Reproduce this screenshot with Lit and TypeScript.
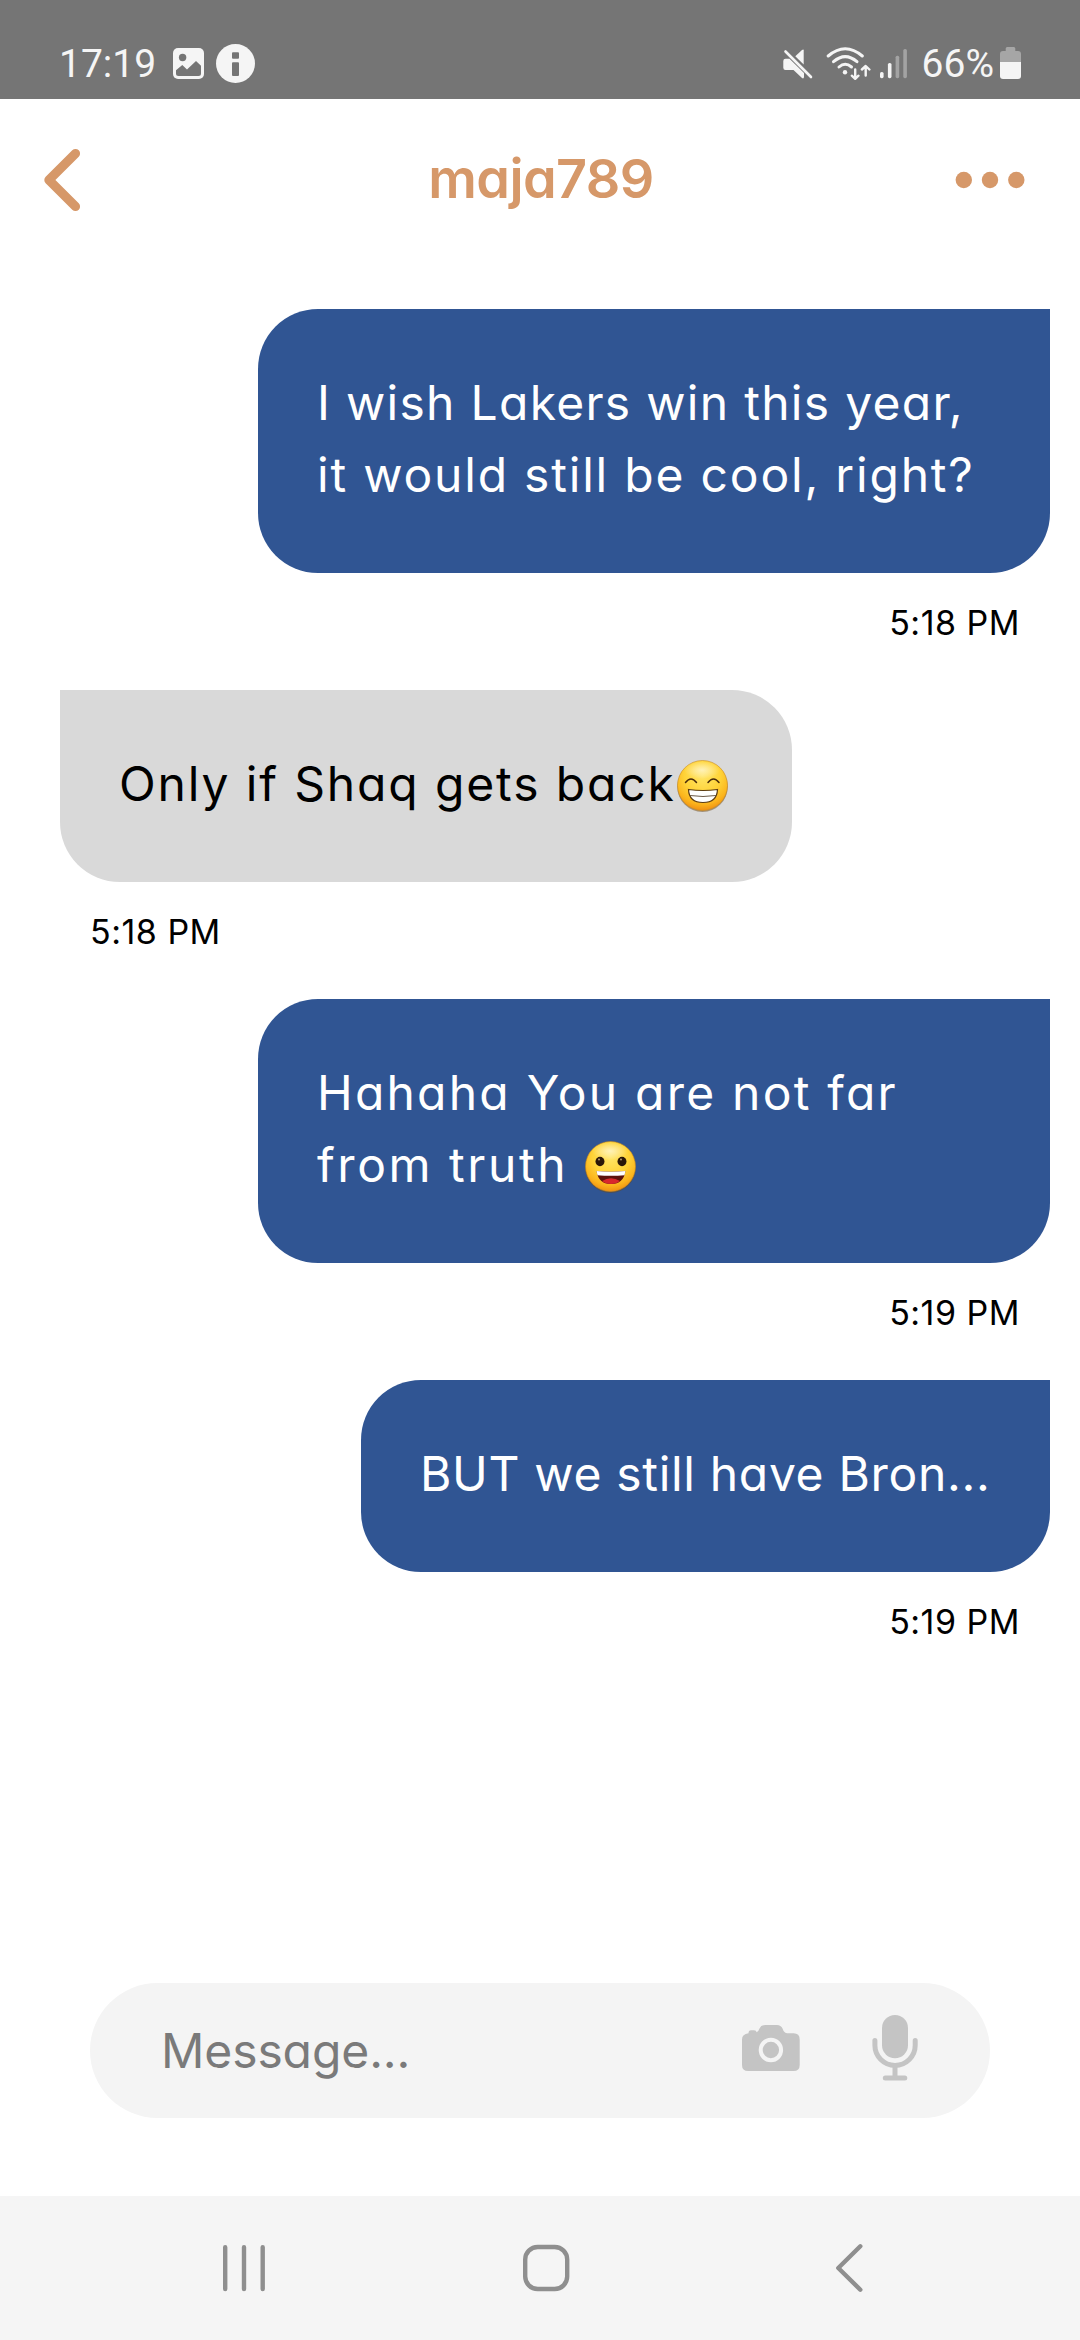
import { LitElement, html, css, svg, nothing } from "lit";
import { customElement, property } from "lit/decorators.js";
import { classMap } from "lit/directives/class-map.js";
import { styleMap } from "lit/directives/style-map.js";

type Emoji = "beaming" | "grinning";

interface Line {
  text: string;
  tracking: number;
  emoji?: Emoji;
}

interface Message {
  mine: boolean;
  width: number;
  lines: Line[];
  time: string;
}

const MESSAGES: Message[] = [
  {
    mine: true,
    width: 792,
    lines: [
      { text: "I wish Lakers win this year,", tracking: 1.29 },
      { text: "it would still be cool, right?", tracking: 1.8 },
    ],
    time: "5:18 PM",
  },
  {
    mine: false,
    width: 732,
    lines: [{ text: "Only if Shaq gets back", tracking: 1.86, emoji: "beaming" }],
    time: "5:18 PM",
  },
  {
    mine: true,
    width: 792,
    lines: [
      { text: "Hahaha You are not far", tracking: 2.22 },
      { text: "from truth ", tracking: 2.55, emoji: "grinning" },
    ],
    time: "5:19 PM",
  },
  {
    mine: true,
    width: 689,
    lines: [{ text: "BUT we still have Bron...", tracking: 0.68 }],
    time: "5:19 PM",
  },
];

/** Glossy round smiley, drawn in two expressions. */
@customElement("chat-emoji")
export class ChatEmoji extends LitElement {
  @property() kind: Emoji = "grinning";

  static styles = css`
    :host {
      display: block;
      flex: none;
      width: 51px;
      height: 53px;
    }
    svg {
      display: block;
    }
  `;

  private beaming() {
    return svg`
      <path d="M8.500 22.500Q14 15.500 19.500 22.500M31 22.500Q36.500 15.500 42 22.500" fill="none" stroke="#4a2c0a" stroke-width="1.500" stroke-linecap="round"/>
      <path d="M11.500 29.500Q26 31.500 40.500 29.500Q40 42.500 26 42.500Q12 42.500 11.500 29.500Z" fill="#fff" stroke="#5a3a10" stroke-width="1.200"/>
      <path d="M13 35.500Q26 37.500 39 35.500" fill="none" stroke="#6b5a48" stroke-width="1"/>`;
  }

  private grinning() {
    return svg`
      <ellipse cx="15" cy="20.500" rx="4.500" ry="4.700" fill="#2a1608"/>
      <ellipse cx="37" cy="20.500" rx="4.500" ry="4.700" fill="#2a1608"/>
      <circle cx="14" cy="18.600" r="1" fill="#b59a72"/>
      <circle cx="36" cy="18.600" r="1" fill="#b59a72"/>
      <path d="M11.500 30Q26 31.500 40.500 30Q38.500 43 26 43Q13.500 43 11.500 30Z" fill="#5c120c"/>
      <path d="M17 40Q26 34.500 35 40Q31.500 43 26 43Q20.500 43 17 40Z" fill="#d9282c"/>
      <path d="M11.500 30Q26 31.500 40.500 30L39.500 34.200Q26 35.500 12.500 34.200Z" fill="#fff"/>`;
  }

  render() {
    return html`
      <svg width="51" height="53" viewBox="0 0 51 53" role="img" aria-label=${this.kind}>
        <defs>
          <radialGradient id="skin" cx=".5" cy=".3" r=".72">
            <stop offset="0" stop-color="#ffe568" />
            <stop offset=".5" stop-color="#ffd338" />
            <stop offset=".8" stop-color="#fbb41c" />
            <stop offset="1" stop-color="#ee8a10" />
          </radialGradient>
          <radialGradient id="shine">
            <stop offset="0" stop-color="#fff6cf" stop-opacity=".8" />
            <stop offset="1" stop-color="#fff6cf" stop-opacity="0" />
          </radialGradient>
        </defs>
        <circle cx="25.500" cy="26.800" r="25.200" fill="#6b4a1a" opacity=".5" />
        <circle cx="25.500" cy="25.500" r="25" fill="url(#skin)" stroke="#c98a1c" stroke-width=".6" />
        <ellipse cx="25" cy="10" rx="18" ry="9" fill="url(#shine)" />
        ${this.kind === "beaming" ? this.beaming() : this.grinning()}
      </svg>
    `;
  }
}

/** System bar with clock, notifications and connectivity. */
@customElement("status-bar")
export class StatusBar extends LitElement {
  static styles = css`
    :host {
      display: flex;
      justify-content: space-between;
      height: 99px;
      box-sizing: border-box;
      padding: 28px 59px 0;
      background: #757575;
      color: #f5f5f5;
      font: 400 39px/46px Roboto, sans-serif;
    }
    .group {
      display: flex;
      align-items: center;
    }
    svg {
      display: block;
      flex: none;
    }
    .picture {
      margin-left: 17px;
    }
    .info {
      margin-left: 12px;
    }
    .wifi {
      margin-left: 13px;
    }
    .signal {
      margin-left: 8px;
    }
    .level {
      margin-left: 14px;
    }
    .battery {
      margin-left: 6px;
    }
  `;

  render() {
    return html`
      <div class="group">
        <span>17:19</span>
        <svg class="picture" width="31" height="39" viewBox="173 44 31 39">
          <rect x="173" y="48" width="31" height="31" rx="5" fill="#f5f5f5" />
          <circle cx="182.600" cy="57.500" r="3.700" fill="#757575" />
          <path d="M176 70.300L182.300 64.900L187 69.400L196 60.900L201 65.800V73.500Q201 76 198.500 76H178.500Q176 76 176 73.500Z" fill="#757575" />
        </svg>
        <svg class="info" width="39" height="39" viewBox="216 44 39 39">
          <circle cx="235.500" cy="63.500" r="19.500" fill="#f5f5f5" />
          <rect x="232" y="52.300" width="7" height="6.400" rx="1" fill="#757575" />
          <rect x="232" y="62.300" width="7" height="13.700" rx="1" fill="#757575" />
        </svg>
      </div>
      <div class="group">
        <svg width="31" height="39" viewBox="782 44 31 39">
          <path d="M803.700 50.500V64.500L795.300 56.200L802 50Q803.700 48.800 803.700 50.500Z" fill="#f5f5f5" />
          <path d="M785.500 58.800H789.500L804 73V77Q803.700 79.300 802 78L793.500 70H785.500Q783.300 70 783.300 67.800V61Q783.300 58.800 785.500 58.800Z" fill="#f5f5f5" />
          <path d="M785.500 51.500L811 77" stroke="#f5f5f5" stroke-width="2.600" stroke-linecap="round" />
        </svg>
        <svg class="wifi" width="45" height="39" viewBox="826 44 45 39" fill="none" stroke="#f5f5f5" stroke-width="3" stroke-linecap="round">
          <path d="M828.200 56Q845.200 41.500 862.300 56" />
          <path d="M833.500 61.700Q845.200 51.500 857 61.700" />
          <path d="M839 67Q845.200 61.500 851.500 67" />
          <circle cx="845" cy="72.300" r="2.200" fill="#f5f5f5" stroke="none" />
          <g stroke-width="2.400" stroke-linejoin="round">
            <path d="M855.200 69.500V78.500M851.800 75.700L855.200 78.800L858.500 75.700" />
            <path d="M865.700 75.500V66.500M861.900 69.500L865.700 66L869.400 69.500" />
          </g>
        </svg>
        <svg class="signal" width="29" height="39" viewBox="879 44 29 39">
          <rect x="880" y="72" width="3.600" height="6.200" rx="1.600" fill="#f5f5f5" />
          <rect x="887.900" y="63" width="3.600" height="15.200" rx="1.600" fill="#f5f5f5" />
          <rect x="895.600" y="55.700" width="3.600" height="22.500" rx="1.600" fill="#a3a3a3" />
          <rect x="903.300" y="49" width="3.600" height="29.200" rx="1.600" fill="#a3a3a3" />
        </svg>
        <span class="level">66%</span>
        <svg class="battery" width="21" height="39" viewBox="1000 44 21 39">
          <path d="M1000 62V54Q1000 51 1003 51H1005.700V48.500Q1005.700 47 1007.200 47H1013.800Q1015.300 47 1015.300 48.500V51H1018Q1021 51 1021 54V62Z" fill="#a6a6a6" />
          <path d="M1000 62H1021V76Q1021 79 1018 79H1003Q1000 79 1000 76Z" fill="#f5f5f5" />
        </svg>
      </div>
    `;
  }
}

@customElement("chat-header")
export class ChatHeader extends LitElement {
  @property() heading = "";

  static styles = css`
    :host {
      display: grid;
      grid-template-columns: 1fr auto 1fr;
      align-items: center;
      height: 162px;
      box-sizing: border-box;
      padding: 0 53px 0 42px;
    }
    svg {
      display: block;
    }
    .more {
      justify-self: end;
    }
    h1 {
      margin: 0 0 3px 13px;
      color: #d69869;
      font: 600 54px/65px Inter, sans-serif;
      font-feature-settings: "cv11" 1;
      letter-spacing: -0.6px;
    }
  `;

  render() {
    return html`
      <svg width="40" height="66" viewBox="42 147 40 66">
        <path d="M75.500 153.500L48.900 180L75.500 206.500" fill="none" stroke="#d69869" stroke-width="9.200" stroke-linecap="round" stroke-linejoin="round" />
      </svg>
      <h1>${this.heading}</h1>
      <svg class="more" width="72" height="20" viewBox="955 170 72 20" fill="#d69869">
        <circle cx="963.800" cy="180" r="8.200" />
        <circle cx="990" cy="180" r="8.200" />
        <circle cx="1016.300" cy="180" r="8.200" />
      </svg>
    `;
  }
}

@customElement("chat-message")
export class ChatMessage extends LitElement {
  @property({ attribute: false }) message!: Message;

  static styles = css`
    :host {
      display: block;
      font-family: Inter, sans-serif;
      font-feature-settings: "cv11" 1;
    }
    .row {
      display: flex;
      flex-direction: column;
      align-items: flex-start;
      padding: 0 30px 0 60px;
    }
    .row.mine {
      align-items: flex-end;
    }
    .bubble {
      box-sizing: border-box;
      padding: 58px 0 62px 60px;
      border-radius: 0 60px 60px 60px;
      background: #d9d9d9;
      color: #000;
      font-size: 48px;
      line-height: 72px;
    }
    .mine .bubble {
      border-radius: 60px 0 60px 60px;
      background: #305593;
      color: #fff;
    }
    .line {
      display: flex;
      align-items: center;
      height: 72px;
      margin-left: -1px;
    }
    .text {
      white-space: pre;
    }
    .line chat-emoji {
      margin: 5px 0 0 1px;
    }
    .time {
      margin: 26px 30px 43px;
      color: #000;
      font-size: 34px;
      line-height: 48px;
      letter-spacing: 0.5px;
    }
  `;

  render() {
    const { mine, width, lines, time } = this.message;
    return html`
      <div class=${classMap({ row: true, mine })}>
        <div class="bubble" style=${styleMap({ width: `${width}px` })}>
          ${lines.map(
            (line) => html`
              <div class="line">
                <span class="text" style=${styleMap({ letterSpacing: `${line.tracking}px` })}>${line.text}</span>
                ${line.emoji ? html`<chat-emoji .kind=${line.emoji}></chat-emoji>` : nothing}
              </div>
            `
          )}
        </div>
        <div class="time">${time}</div>
      </div>
    `;
  }
}

@customElement("message-composer")
export class MessageComposer extends LitElement {
  static styles = css`
    :host {
      display: flex;
      align-items: center;
      height: 135px;
      box-sizing: border-box;
      margin: 0 90px 78px;
      padding: 0 71px 0 71px;
      border-radius: 68px;
      background: #f4f4f4;
    }
    .placeholder {
      flex: 1;
      color: #7a7a7a;
      font: 400 48px/72px Inter, sans-serif;
      font-feature-settings: "cv11" 1;
      letter-spacing: -0.1px;
    }
    .icons {
      display: flex;
      align-items: center;
      gap: 70px;
      padding-bottom: 5px;
    }
    svg {
      display: block;
    }
  `;

  render() {
    return html`
      <span class="placeholder">Message...</span>
      <div class="icons">
        <svg width="60" height="50" viewBox="741 2023 60 50">
          <path d="M748.500 2033.300Q748.500 2030.300 751 2030.300H754Q756.500 2030.300 756.600 2032.300Q758.500 2031.500 759.500 2028.500Q761 2025 765.500 2025H777Q781 2025 782.500 2028.500Q784 2033.300 787.500 2033.300H793.500Q799.700 2033.300 799.700 2039.500V2065Q799.700 2071 793.500 2071H748.200Q742 2071 742 2065V2039.500Q742 2034 748.500 2033.300Z" fill="#c4c4c4" />
          <circle cx="770.900" cy="2050" r="10.200" fill="none" stroke="#f4f4f4" stroke-width="4" />
        </svg>
        <svg width="48" height="68" viewBox="871 2014 48 68">
          <rect x="882" y="2015" width="26" height="43.300" rx="13" fill="#c4c4c4" />
          <path d="M874.900 2040.500V2045.300A20.150 20.150 0 0 0 915.200 2045.300V2040.500M895 2066V2077.500M885.300 2078H904.800" fill="none" stroke="#c4c4c4" stroke-width="5" stroke-linecap="round" />
        </svg>
      </div>
    `;
  }
}

@customElement("system-nav")
export class SystemNav extends LitElement {
  static styles = css`
    :host {
      display: flex;
      align-items: center;
      justify-content: space-between;
      height: 144px;
      box-sizing: border-box;
      padding: 0 216px 0 222px;
      background: #f5f5f5;
    }
    svg {
      display: block;
      fill: none;
      stroke: #8f8f8f;
      stroke-width: 4.4px;
      stroke-linecap: round;
      stroke-linejoin: round;
    }
    .home {
      margin: 0 4px 0 -4px;
    }
  `;

  render() {
    return html`
      <svg width="44" height="50" viewBox="222 2243 44 50">
        <path d="M225.200 2247.200V2289M244 2247.200V2289M262.700 2247.200V2289" />
      </svg>
      <svg class="home" width="48" height="50" viewBox="522 2243 48 50">
        <rect x="525.200" y="2247" width="42" height="42" rx="12.500" />
      </svg>
      <svg width="30" height="52" viewBox="834 2242 30 52">
        <path d="M860.300 2246.300L838.300 2268L860.300 2289.700" />
      </svg>
    `;
  }
}

@customElement("app-root")
export class AppRoot extends LitElement {
  static styles = css`
    :host {
      display: flex;
      flex-direction: column;
      width: 1080px;
      height: 2340px;
      background: #fff;
      overflow: hidden;
    }
    .thread {
      flex: 1;
      padding-top: 48px;
    }
  `;

  render() {
    return html`
      <status-bar></status-bar>
      <chat-header heading="maja789"></chat-header>
      <div class="thread">
        ${MESSAGES.map((message) => html`<chat-message .message=${message}></chat-message>`)}
      </div>
      <message-composer></message-composer>
      <system-nav></system-nav>
    `;
  }
}
